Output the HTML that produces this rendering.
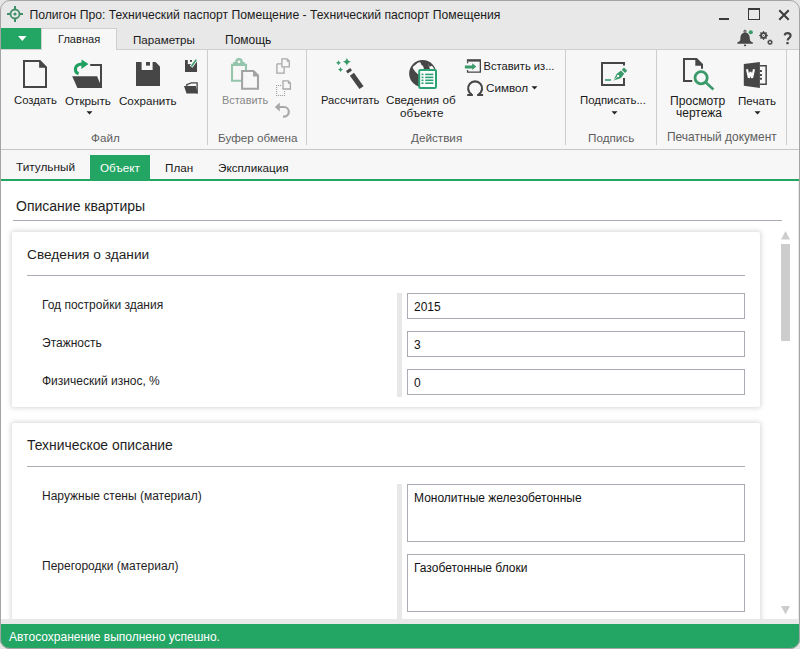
<!DOCTYPE html>
<html><head><meta charset="utf-8">
<style>
*{margin:0;padding:0;box-sizing:border-box}
html,body{width:800px;height:649px;overflow:hidden;background:#e6e6e6}
body{font-family:"Liberation Sans",sans-serif;color:#1e1e1e;position:relative}
.a{position:absolute;white-space:nowrap;line-height:1}
#win{position:absolute;left:0;top:0;width:800px;height:649px;border-radius:10px;overflow:hidden;background:#e8e8e8}
#frame{position:absolute;left:0;top:0;width:800px;height:649px;border:1px solid #a4a4a4;border-radius:10px;z-index:50;pointer-events:none}
#title{font-size:12.2px;left:29.4px;top:9px;color:#1b1b1b}
.rib{position:absolute;left:0;top:49px;width:800px;height:101px;background:#f7f7f7;border-top:1px solid #cfcfcf;border-bottom:1px solid #c6c6c6}
.ul{font-size:11.7px;color:#1a1a1a}
.grp{font-size:11.7px;color:#5e5e5e;margin-top:-1px}
.sep{position:absolute;top:50px;width:1px;height:95px;background:#cdcdcd}
.tabs2{position:absolute;left:0;top:150px;width:800px;height:29px;background:#f7f7f7}
.content{position:absolute;left:1px;top:181px;width:797px;height:438px;background:#fff}
.card{position:absolute;left:12px;width:748px;background:#fff;border-radius:2px;box-shadow:0 0 5px 1px rgba(0,0,0,0.16)}
.inp{position:absolute;left:407px;width:338px;border:1px solid #ababb3;background:#fff}
.vbar{position:absolute;left:397px;width:5px;background:#e8e8e8}
.rl{font-size:12px;color:#1e1e1e}
.it{font-size:12px;color:#111}
.hd{font-size:14px;color:#1e1e1e}
.hl{position:absolute;height:1px;background:#acacb4}
#status{position:absolute;left:0;top:624px;width:800px;height:25px;background:#23a564}
</style></head><body>
<div id="win">
  <!-- title bar -->
  <svg class="a" style="left:6px;top:5px" width="18" height="18" viewBox="0 0 18 18">
    <g fill="none" stroke="#3f8f68"><circle cx="9" cy="9" r="4.5" stroke-width="1.8"/><path d="M9 1v3.4M9 13.6v3.4M1 9h3.4M13.6 9h3.4" stroke-width="2"/></g>
    <circle cx="9" cy="9" r="1.6" fill="#3f8f68"/>
  </svg>
  <div class="a" id="title">Полигон Про: Технический паспорт Помещение - Технический паспорт Помещения</div>
  <!-- window controls -->
  <div class="a" style="left:719px;top:18px;width:10px;height:2px;background:#3a3a3a"></div>
  <div class="a" style="left:748px;top:8px;width:12px;height:12px;border:1px solid #3a3a3a;border-top-width:2px"></div>
  <svg class="a" style="left:778px;top:9px" width="12" height="12" viewBox="0 0 12 12"><path d="M1.3 1.3l9.4 9.4M10.7 1.3l-9.4 9.4" stroke="#3a3a3a" stroke-width="2"/></svg>

  <!-- menu tabs -->
  <div class="a" style="left:0;top:28px;width:41px;height:22px;background:#23a564"></div>
  <svg class="a" style="left:18px;top:36px" width="9" height="6"><path d="M0 0h8.5L4.25 5z" fill="#fff"/></svg>
  <div class="rib"></div>
  <div class="a" style="left:41px;top:28px;width:76px;height:22px;background:#f7f7f7;border:1px solid #cfcfcf;border-bottom:none;z-index:2"></div>
  <div class="a ul" style="left:58px;top:34px;font-size:11.1px;z-index:3">Главная</div>
  <div class="a ul" style="left:133px;top:34px;font-size:11.6px">Параметры</div>
  <div class="a ul" style="left:225px;top:34px;font-size:12px">Помощь</div>

  <!-- right icons -->
  <svg class="a" style="left:734px;top:27px" width="22" height="22" viewBox="0 0 22 22">
    <path d="M11.1 5.4C8 5.4 6.5 8 6.4 11L6.3 13C6 14.3 4.6 14.9 3.4 15.3V16.8H18.8V15.3C17.6 14.9 16.2 14.3 15.9 13L15.8 11C15.7 8 14.2 5.4 11.1 5.4z" fill="#474747"/>
    <circle cx="11" cy="4.2" r="1.05" fill="none" stroke="#474747" stroke-width="1"/>
    <rect x="10" y="17.6" width="2.1" height="1.5" fill="#474747"/>
    <circle cx="16.8" cy="5.25" r="2.1" fill="#3a9a6a"/>
  </svg>
  <svg class="a" style="left:756px;top:28px" width="20" height="20" viewBox="0 0 20 20">
    <path d="M7.55 2.85 L8.81 4.50 L10.87 4.23 L10.60 6.29 L12.25 7.55 L10.60 8.81 L10.87 10.87 L8.81 10.60 L7.55 12.25 L6.29 10.60 L4.23 10.87 L4.50 8.81 L2.85 7.55 L4.50 6.29 L4.23 4.23 L6.29 4.50z" fill="#474747"/>
    <path d="M15.15 11.43 L15.56 12.64 L16.77 13.05 L16.20 14.20 L16.77 15.35 L15.56 15.76 L15.15 16.97 L14.00 16.40 L12.85 16.97 L12.44 15.76 L11.23 15.35 L11.80 14.20 L11.23 13.05 L12.44 12.64 L12.85 11.43 L14.00 12.00z" fill="#474747"/>
    <circle cx="7.55" cy="7.55" r="1.45" fill="#e8e8e8"/><circle cx="7.55" cy="7.55" r="0.55" fill="#474747"/>
    <circle cx="14" cy="14.2" r="1.0" fill="#e8e8e8"/>
  </svg>
  <svg class="a" style="left:782px;top:30px" width="12" height="16" viewBox="0 0 12 16"><path d="M2.7 5.4C2.9 3.9 4.1 3.1 5.6 3.1 7.4 3.1 8.6 4.2 8.6 5.7 8.6 7.7 5.6 8.1 5.6 10.6" fill="none" stroke="#474747" stroke-width="2.1"/><rect x="4.35" y="12" width="2.3" height="2.2" fill="#474747"/></svg>

  <!-- ===== RIBBON CONTENT ===== -->
  <!-- Создать -->
  <svg class="a" style="left:22px;top:59px" width="26" height="30" viewBox="0 0 26 30">
    <path d="M2 2h15.4L24 8.6V28H2z" fill="none" stroke="#464646" stroke-width="2"/>
    <path d="M17.1 1h1l6.9 6.9v0.8h-7.9z" fill="#464646"/>
  </svg>
  <div class="a ul" style="left:14px;top:95px;font-size:11.3px">Создать</div>
  <!-- Открыть -->
  <svg class="a" style="left:68px;top:56px" width="38" height="36" viewBox="0 0 38 36">
    <path d="M22.2 9H33v23" fill="none" stroke="#464646" stroke-width="2"/>
    <path d="M4.2 20.3h24.9l3 7.2V32H9.4z" fill="#464646"/>
    <path d="M10.6 17.6C7.2 16.8 6.6 12.8 8.3 10.4 9.6 8.6 11.6 8 14.5 8" fill="none" stroke="#20a060" stroke-width="3.2"/>
    <path d="M13.6 3.6L20.5 8 13.3 12.9z" fill="#20a060"/>
  </svg>
  <div class="a ul" style="left:65px;top:95px;font-size:11.7px">Открыть</div>
  <svg class="a" style="left:86px;top:111px" width="7" height="4"><path d="M0.5 0.2h6L3.5 3.6z" fill="#222"/></svg>
  <!-- Сохранить -->
  <svg class="a" style="left:136px;top:62px" width="24" height="24" viewBox="0 0 24 24">
    <path d="M0 0h19.6L24 4.5V24H0z" fill="#464646"/>
    <rect x="5.6" y="0" width="11" height="8" fill="#f7f7f7"/>
    <rect x="10" y="0" width="4" height="3.6" fill="#464646"/>
  </svg>
  <div class="a ul" style="left:119px;top:95px;font-size:11.6px">Сохранить</div>
  <!-- small save/folder -->
  <svg class="a" style="left:184px;top:59px" width="16" height="14" viewBox="0 0 16 14">
    <path d="M1 1h12v12H1z" fill="#464646"/>
    <rect x="3.8" y="1" width="6.2" height="4.1" fill="#f7f7f7"/>
    <rect x="6" y="1" width="2" height="1.8" fill="#464646"/>
    <path d="M7.1 7.8L12.6 0.4" stroke="#f7f7f7" stroke-width="3.2"/>
    <path d="M7.4 7.3L12.3 0.6" stroke="#3a9a6a" stroke-width="1.6"/>
  </svg>
  <svg class="a" style="left:183px;top:81px" width="17" height="14" viewBox="0 0 17 14">
    <path d="M3.75 5.1V3.6L8.3 1.85H14.15V12.5" fill="none" stroke="#464646" stroke-width="1.3"/>
    <path d="M1 5.1h11.9l1.9 7.4H3.5z" fill="#464646"/>
  </svg>
  <div class="sep" style="left:207px"></div>
  <div class="a grp" style="left:91px;top:133px">Файл</div>

  <!-- Буфер обмена -->
  <svg class="a" style="left:226px;top:54px" width="40" height="40" viewBox="0 0 40 40">
    <path d="M16 26.8H6V10.9h14V16" fill="none" stroke="#94c6ad" stroke-width="2.1"/>
    <path d="M7.1 8h11.7v2.5H7.1z" fill="#94c6ad"/>
    <circle cx="13" cy="8" r="3.9" fill="#94c6ad"/>
    <circle cx="13" cy="7.8" r="1.4" fill="#f7f7f7"/>
    <path d="M16.1 17h11.2l4.7 4.7V34.8H16.1z" fill="none" stroke="#a3a3a3" stroke-width="2.1"/>
    <path d="M27 16h.8l5.2 5.2v1.3h-6z" fill="#a3a3a3"/>
  </svg>
  <div class="a ul" style="left:222px;top:95px;font-size:10.9px;color:#888">Вставить</div>
  <svg class="a" style="left:270px;top:54px" width="24" height="68" viewBox="0 0 24 68">
    <g fill="none" stroke="#a8a8a8" stroke-width="1.3">
      <path d="M6.9 9.8h4.4M6.9 9.8v9.3h7.2v-5.7"/>
      <path d="M11.9 4.8h5.2l2.2 2.2v5.8h-7.4z"/>
      <path d="M13 26.8h5.2l2.2 2.2V35h-7.4z"/>
      
    </g>
    <path d="M16.8 5.2L19.3 7.7h-2.5z M17.9 27.2L20.4 29.7h-2.5z" fill="#a8a8a8"/>
    <path d="M6 31h1.1v1.1h-1.1zM8 31h1.1v1.1h-1.1zM10 31h1.1v1.1h-1.1zM6 33h1.1v1.1h-1.1zM6 35h1.1v1.1h-1.1zM6 37h1.1v1.1h-1.1zM6 39h1.1v1.1h-1.1zM6 41h1.1v1.1h-1.1zM8 41h1.1v1.1h-1.1zM10 41h1.1v1.1h-1.1zM12 41h1.1v1.1h-1.1zM14 41h1.1v1.1h-1.1zM14 39h1.1v1.1h-1.1zM14 37h1.1v1.1h-1.1z" fill="#a0a0a0"/>
    <path d="M8 53h6a4.8 4.8 0 0 1 0 9.6h-1" fill="none" stroke="#a8a8a8" stroke-width="2.2"/>
    <path d="M4.8 53l5-4.6v9.2z" fill="#a8a8a8"/>
  </svg>
  <div class="sep" style="left:306px"></div>
  <div class="a grp" style="left:218px;top:133px">Буфер обмена</div>

  <!-- Действия -->
  <svg class="a" style="left:330px;top:52px" width="40" height="40" viewBox="0 0 40 40">
    <g fill="#3a9a6a">
      <path d="M16.9 5.8Q17.6 9.1 21.1 9.8 17.6 10.5 16.9 13.9 16.2 10.5 12.7 9.8 16.2 9.1 16.9 5.8z"/>
      <path d="M8.5 8.2Q9 10.2 11 10.7 9 11.2 8.5 13.2 8 11.2 6 10.7 8 10.2 8.5 8.2z"/>
      <path d="M10.5 15.1Q11 17.1 13 17.6 11 18.1 10.5 20.1 10 18.1 8 17.6 10 17.1 10.5 15.1z"/>
    </g>
    <g fill="#464646">
      <path d="M16 19.1L20.25 16.1 22 18.5 17.75 21.5z"/>
      <path d="M19.9 23.65L23.95 20.75 33.55 34.15 29.45 37.05z"/>
    </g>
  </svg>
  <div class="a ul" style="left:321px;top:95px;font-size:11.2px">Рассчитать</div>
  <svg class="a" style="left:408px;top:59px" width="31" height="31" viewBox="0 0 31 31">
    <circle cx="14.65" cy="14.5" r="13.5" fill="#464646"/>
    <path d="M4.7 8L10.2 3.6 12.4 3.2 13.2 5.4 15 6.9 15.8 9.1 15.8 12 10.2 15.4 7.3 12.8 5 9.5z" fill="#f7f7f7"/>
    <path d="M20 4.2l1.6 3.6 2.4-1c1 1 1.8 2.2 2.3 3.4H22z" fill="#f7f7f7"/>
    <rect x="11.2" y="10.9" width="16.8" height="18.1" rx="1.2" fill="#fff" stroke="#2aa274" stroke-width="2"/>
    <g fill="#2aa274">
      <rect x="13.5" y="14.6" width="2" height="1.6"/><rect x="17.2" y="14.6" width="8.2" height="1.6"/>
      <rect x="13.5" y="17.6" width="2" height="1.6"/><rect x="17.2" y="17.6" width="8.2" height="1.6"/>
      <rect x="13.5" y="20.5" width="2" height="1.6"/><rect x="17.2" y="20.5" width="8.2" height="1.6"/>
      <rect x="13.5" y="23.4" width="2" height="1.6"/><rect x="17.2" y="23.4" width="8.2" height="1.6"/>
    </g>
  </svg>
  <div class="a ul" style="left:386px;top:94.3px;font-size:11.65px">Сведения об</div>
  <div class="a ul" style="left:400px;top:106.5px;font-size:11.65px">объекте</div>
  <svg class="a" style="left:464px;top:58px" width="20" height="40" viewBox="0 0 20 40">
    <path d="M3.55 11.9V14.05H16.35V2.5" fill="none" stroke="#464646" stroke-width="1.3"/>
    <rect x="2.9" y="1.2" width="14.1" height="2.4" fill="#464646"/>
    <path d="M3.55 3.5v1.8" stroke="#464646" stroke-width="1.3"/>
    <path d="M0.9 7.4h7.3V5.3l4.1 3.3-4.1 3.3V10.5H0.9z" fill="#3a9a6a"/>
    <path d="M7.6 36.4A7 7 0 1 1 14.6 36.4" fill="none" stroke="#464646" stroke-width="2.1"/><path d="M3.2 36.1h5.7v1.8H3.2zM13.1 36.1h6v1.8h-6z" fill="#464646"/>
  </svg>
  <div class="a ul" style="left:483.5px;top:61px;font-size:11.15px">Вставить из...</div>
  <div class="a ul" style="left:486px;top:82px;font-size:11.7px">Символ</div>
  <svg class="a" style="left:531px;top:86px" width="7" height="4"><path d="M0.5 0.2h6L3.5 3.6z" fill="#222"/></svg>
  <div class="sep" style="left:565px"></div>
  <div class="a grp" style="left:411px;top:133px">Действия</div>

  <!-- Подпись -->
  <svg class="a" style="left:600px;top:61px" width="28" height="26" viewBox="0 0 28 26">
    <path d="M24 4.5V2H2v22h22v-7" fill="none" stroke="#464646" stroke-width="2"/>
    <rect x="5" y="18.2" width="6" height="1.6" fill="#3a9a6a"/>
    <path d="M13.5 19.5l3-6.5 4.5-3.5 3.2 3.2-3.5 4.5z" fill="#3a9a6a"/>
    <path d="M21.8 8.8l2.2-2.2 3.2 3.2-2.2 2.2z" fill="#3a9a6a"/>
    <circle cx="18" cy="15" r="1.2" fill="#f7f7f7"/>
    <path d="M14 19l3.5-3.5" stroke="#f7f7f7" stroke-width=".7"/>
  </svg>
  <div class="a ul" style="left:580px;top:95px;font-size:11.4px">Подписать...</div>
  <svg class="a" style="left:611px;top:111px" width="7" height="4"><path d="M0.5 0.2h6L3.5 3.6z" fill="#222"/></svg>
  <div class="sep" style="left:656px"></div>
  <div class="a grp" style="left:588px;top:133px">Подпись</div>

  <!-- Печатный документ -->
  <svg class="a" style="left:682px;top:57px" width="34" height="34" viewBox="0 0 34 34">
    <path d="M2 2h12L20 8V11.8" fill="none" stroke="#464646" stroke-width="2"/>
    <path d="M2 1v23h8.2" fill="none" stroke="#464646" stroke-width="2"/>
    <path d="M13.3 1h1.5l6.2 6.2v1.5h-7.7z" fill="#464646"/>
    <circle cx="19.1" cy="20.8" r="6.1" fill="none" stroke="#3a9a6a" stroke-width="2.8"/>
    <path d="M23.6 25.3l7.8 7.2" stroke="#3a9a6a" stroke-width="2.6"/>
  </svg>
  <div class="a ul" style="left:670px;top:94.6px;font-size:12.1px">Просмотр</div>
  <div class="a ul" style="left:676px;top:106.6px;font-size:12px">чертежа</div>
  <svg class="a" style="left:743px;top:61px" width="26" height="28" viewBox="0 0 26 28">
    <path d="M16.9 4.65h6.25v18.5h-6.25" fill="none" stroke="#464646" stroke-width="1.5"/>
    <path d="M0.8 3l16.1-1.9v25.8L0.8 24.7z" fill="#464646"/>
    <path d="M16.9 9h2v2h-2zM16.9 12.9h2v2h-2zM16.9 16.8h2v2h-2z" fill="#464646"/>
    <path d="M4 8.2l1.9 8.7 1.6-6 1.6 6 1.9-8.7" fill="none" stroke="#fff" stroke-width="2.1" stroke-linejoin="miter" stroke-miterlimit="3"/>
  </svg>
  <div class="a ul" style="left:738px;top:95px;font-size:11.6px">Печать</div>
  <svg class="a" style="left:754px;top:111px" width="7" height="4"><path d="M0.5 0.2h6L3.5 3.6z" fill="#222"/></svg>
  <div class="sep" style="left:786px"></div>
  <div class="a grp" style="left:667px;top:133px;font-size:11.95px">Печатный документ</div>

  <!-- ===== DOC TABS ===== -->
  <div class="tabs2"></div>
  <div class="a ul" style="left:16px;top:162px;font-size:11.8px">Титульный</div>
  <div class="a" style="left:90px;top:155px;width:60px;height:26px;background:#23a564"></div>
  <div class="a ul" style="left:100px;top:162px;font-size:11.7px;color:#fff">Объект</div>
  <div class="a ul" style="left:165px;top:162px;font-size:11.7px">План</div>
  <div class="a ul" style="left:218px;top:162px;font-size:11.7px">Экспликация</div>
  <div class="a" style="left:0;top:179px;width:800px;height:2px;background:#23a564"></div>

  <!-- ===== CONTENT ===== -->
  <div class="content"></div>
  <div class="a hd" style="left:16px;top:199px">Описание квартиры</div>
  <div class="hl" style="left:13px;top:220px;width:769px"></div>

  <div class="card" style="top:232px;height:175px"></div>
  <div class="a hd" style="left:27px;top:248px;font-size:13.7px">Сведения о здании</div>
  <div class="hl" style="left:27px;top:275px;width:718px"></div>
  <div class="vbar" style="top:293px;height:104px"></div>
  <div class="a rl" style="left:42px;top:299px">Год постройки здания</div>
  <div class="a rl" style="left:42px;top:337px">Этажность</div>
  <div class="a rl" style="left:42px;top:375px">Физический износ, %</div>
  <div class="inp" style="top:293px;height:26px"></div>
  <div class="inp" style="top:331px;height:26px"></div>
  <div class="inp" style="top:369px;height:26px"></div>
  <div class="a it" style="left:414px;top:301px">2015</div>
  <div class="a it" style="left:414px;top:339px">3</div>
  <div class="a it" style="left:414px;top:377px">0</div>

  <div class="card" style="top:423px;height:220px"></div>
  <div class="a hd" style="left:27px;top:439px;font-size:13.9px">Техническое описание</div>
  <div class="hl" style="left:27px;top:466px;width:718px"></div>
  <div class="vbar" style="top:484px;height:140px"></div>
  <div class="a rl" style="left:42px;top:490px">Наружные стены (материал)</div>
  <div class="a rl" style="left:42px;top:560px">Перегородки (материал)</div>
  <div class="inp" style="top:484px;height:58px"></div>
  <div class="inp" style="top:554px;height:58px"></div>
  <div class="a it" style="left:414px;top:492px">Монолитные железобетонные</div>
  <div class="a it" style="left:414px;top:562px">Газобетонные блоки</div>

  <!-- scrollbar -->
  <svg class="a" style="left:781px;top:231px" width="9" height="9"><path d="M0 8.5L4.5 0 9 8.5z" fill="#cdcdcd"/></svg>
  <div class="a" style="left:781px;top:244px;width:9px;height:97px;background:#cdcdcd"></div>
  <svg class="a" style="left:781px;top:606px" width="9" height="9"><path d="M0 0h9L4.5 8.5z" fill="#cdcdcd"/></svg>

  <div class="a" style="left:0;top:619px;width:800px;height:5px;background:#e8e8e8"></div>
  <div id="status"><div class="a" style="left:9px;top:7px;font-size:12px;color:#fff">Автосохранение выполнено успешно.</div></div>
</div>
<div id="frame"></div>
</body></html>
